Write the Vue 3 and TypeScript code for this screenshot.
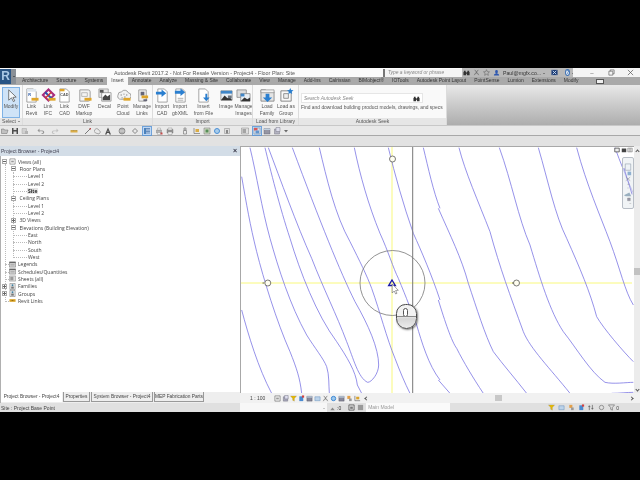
<template>
  <div class="screen">
    <div class="window">
      <div class="app-btn"><span class="app-r">R</span><span class="app-arrow"></span></div>

      <header class="titlebar">
        <span class="doc-title">Autodesk Revit 2017.2 -  Not For Resale Version -    Project4 - Floor Plan: Site</span>
        <div class="search-box">Type a keyword or phrase</div>
        <div class="infocenter">
          <svg v-for="name in ['binoculars', 'sign', 'star']" :key="name" class="ic8" viewBox="0 0 16 16">
            <path v-for="(p, i) in icons[name]" :key="i" :d="p.d" :fill="p.fill || 'none'" :stroke="p.stroke" :stroke-width="p.sw" />
          </svg>
          <svg class="ic8" viewBox="0 0 16 16">
            <path d="M5 5a3 3 0 016 0v2a3 3 0 01-6 0zM2 15c0-4 3-5 6-5s6 1 6 5z" fill="#2f58b0" />
          </svg>
          <span class="user">Paul@mgfx.co...</span>
          <span class="caret"></span>
          <svg class="ic8 exchange" viewBox="0 0 16 16">
            <path d="M1 2h14v12H1z" fill="#1f3f78" /><path d="M4 4l8 8M12 4l-8 8" stroke="#cfe0f5" stroke-width="2" />
          </svg>
          <span class="help">?</span>
          <span class="caret"></span>
        </div>
        <div class="win-controls">
          <span class="win-btn">–</span>
          <svg class="win-svg" viewBox="0 0 8 8"><path d="M1 2.500h4.500v4.500H1zM2.500 2.500V1H7v4.500H5.500" fill="none" stroke="#555" stroke-width=".7" /></svg>
          <svg class="win-svg" viewBox="0 0 8 8"><path d="M1 1l6 6M7 1l-6 6" stroke="#555" stroke-width=".8" /></svg>
        </div>
      </header>

      <nav class="tabs">
        <span v-for="tab in tabs" :key="tab" :class="['tab', { active: tab === 'Insert' }]">{{ tab }}</span>
        <span class="tab-toggle"></span>
      </nav>

      <section class="ribbon">
        <div v-for="panel in panels" :key="panel.name" class="panel" :style="{ width: panel.width + 'px' }">
          <div class="panel-body" :style="{ paddingLeft: (panel.pad || 0) + 'px' }">
            <button
              v-for="b in panel.buttons"
              :key="b.label"
              type="button"
              :class="['rb', { selected: b.selected }]"
              :style="{ width: b.width + 'px' }"
            >
              <svg class="rb-icon" viewBox="0 0 16 16">
                <path v-for="(p, i) in icons[b.icon]" :key="i" :d="p.d" :fill="p.fill || 'none'" :stroke="p.stroke" :stroke-width="p.sw" />
                <text v-if="b.mark" :x="b.markX || 3.500" y="9" class="icon-mark" :fill="b.markFill || '#555'">{{ b.mark }}</text>
              </svg>
              <span class="rb-label">{{ b.label }}</span>
            </button>
            <div v-if="panel.name === 'Autodesk Seek'" class="seek">
              <div class="seek-input">
                <span>Search Autodesk Seek</span>
                <svg class="ic8" viewBox="0 0 16 16">
                  <path v-for="(p, i) in icons.binoculars" :key="i" :d="p.d" :fill="p.fill" />
                </svg>
              </div>
              <p class="seek-text">Find and download building product models, drawings, and specs</p>
            </div>
          </div>
          <div class="panel-label">{{ panel.name }}<span v-if="panel.name === 'Select'" class="caret label-caret"></span></div>
        </div>
        <div class="ribbon-rest"></div>
      </section>

      <div class="qat">
        <svg
          v-for="(q, idx) in qatIcons"
          :key="idx"
          :class="['q-icon', { on: q.on }]"
          :style="{ marginLeft: q.gap + 'px' }"
          viewBox="0 0 16 16"
        >
          <path v-for="(p, i) in icons[q.icon]" :key="i" :d="p.d" :fill="p.fill || 'none'" :stroke="p.stroke" :stroke-width="p.sw" />
        </svg>
      </div>
      <div class="band"></div>

      <main class="main">
        <aside class="browser">
          <div class="browser-title">
            <span>Project Browser - Project4</span>
            <span class="browser-close">×</span>
          </div>
          <div class="tree">
            <i class="vline first"></i>
            <i class="vline second"></i>
            <div
              v-for="(row, idx) in rows"
              :key="idx"
              :class="['row', 'd' + row.depth, { leaf: !row.box, current: row.current }]"
            >
              <span v-if="row.box" :class="['box', row.box]"></span>
              <span v-else-if="row.depth < 2" class="box blank"></span>
              <svg v-if="row.icon" class="row-icon" viewBox="0 0 16 16">
                <path v-for="(p, i) in icons[row.icon]" :key="i" :d="p.d" :fill="p.fill || 'none'" :stroke="p.stroke" :stroke-width="p.sw" />
              </svg>
              <span class="row-label">{{ row.label }}</span>
            </div>
          </div>
          <div class="browser-tabs">
            <span
              v-for="(t, idx) in browserTabs"
              :key="t.label"
              :class="['b-tab', { active: idx === 0 }]"
              :style="{ width: t.width + 'px' }"
            >{{ t.label }}</span>
          </div>
        </aside>

        <div class="view">
          <div class="view-top">
            <div class="canvas">
              <svg class="drawing" viewBox="240 146 394 247">
                <line x1="240.500" y1="146" x2="240.500" y2="393" stroke="#a8a8a8" />
                <line x1="240" y1="146.500" x2="634" y2="146.500" stroke="#a8a8a8" />
                <line x1="241" y1="283" x2="632" y2="283" stroke="#f9f97c" stroke-width="1" />
                <line x1="392" y1="147" x2="392" y2="393" stroke="#f9f97c" stroke-width="1" />
                <g transform="translate(240 145) scale(.33333)" class="contours">
                  <path v-for="d in contoursLeft" :key="d" :d="d" />
                </g>
                <g transform="translate(440 145) scale(.33333)" class="contours">
                  <path v-for="d in contoursRight" :key="d" :d="d" />
                </g>
                <line x1="412.700" y1="147" x2="412.700" y2="393" stroke="#777" stroke-width="1" />
                <circle cx="392.500" cy="283" r="32.500" fill="none" stroke="#777" stroke-width=".8" />
                <g v-for="m in markers" :key="m.x" class="marker">
                  <circle :cx="m.x" :cy="m.y" r="3" />
                </g>
                <path d="M264 283h-1.500M513.500 283h-1.500" stroke="#222" stroke-width=".7" />
                <path d="M392 280l3.300 5.500h-6.600z" fill="none" stroke="#1d1da8" stroke-width="1.400" />
                <path d="M392.200 284v9l2-2 1.500 3 1.300-.7-1.400-2.800 2.700-.2z" fill="#fff" stroke="#666" stroke-width=".6" />
              </svg>
              <div class="mouse">
                <span class="wheel"></span>
                <span class="mouse-split"></span>
              </div>
              <div class="view-ctrls">
                <svg class="vc" viewBox="0 0 8 8"><path d="M1 1.500h6v5H1z" fill="#eee" stroke="#444" /></svg>
                <svg class="vc" viewBox="0 0 8 8"><path d="M1 2h6v5H1z" fill="#444" /></svg>
                <svg class="vc" viewBox="0 0 8 8"><path d="M1 1.500h6v5H1zM4 1.500v5" fill="#ddd" stroke="#777" stroke-width=".7" /></svg>
              </div>
              <div class="nav-bar">
                <svg viewBox="0 0 11 51">
                  <path d="M2.500 4.500h6v7h-6z" fill="#eef2f6" stroke="#8a96a5" stroke-width=".6" />
                  <path d="M5 13h4v4H5z" fill="#8fb0d0" />
                  <path d="M1 9L10 38" stroke="#6b66d9" stroke-width=".7" />
                  <path d="M3 19l5 4M8 19l-5 4M5 27h2M5 31h1" stroke="#8a8f95" stroke-width=".6" />
                  <path d="M1 39l6-3 2 4H3z" fill="#9ab0c0" />
                  <path d="M5 42h3v3H5zM7 48h2" fill="#99a" stroke="#888" stroke-width=".4" />
                </svg>
              </div>
            </div>
            <div class="vscroll">
              <span class="chev up"></span>
              <span class="thumb"></span>
              <span class="chev down"></span>
            </div>
          </div>
          <div class="view-bar">
            <span class="scale">1 : 100</span>
            <svg
              v-for="(v, idx) in viewBarIcons"
              :key="idx"
              class="vb-icon"
              viewBox="0 0 16 16"
            >
              <path v-for="(p, i) in icons[v]" :key="i" :d="p.d" :fill="p.fill || 'none'" :stroke="p.stroke" :stroke-width="p.sw" />
            </svg>
            <span class="chev left"></span>
            <div class="hscroll"><span class="hthumb"></span></div>
            <span class="chev right"></span>
          </div>
        </div>
      </main>

      <footer class="statusbar">
        <span class="status-text">Site : Project Base Point</span>
        <div class="status-input"><span class="combo-arrow"></span></div>
        <svg class="st-icon" viewBox="0 0 16 16"><path d="M3 14l5-6 5 6z" fill="#888" /></svg>
        <span class="status-zero">:0</span>
        <svg class="st-icon wide" viewBox="0 0 16 16"><path d="M2 2h12v12H2z" fill="#ddd" stroke="#333" stroke-width="1.400" /><path d="M5 6h6v5H5z" fill="#777" /></svg>
        <svg class="st-icon" viewBox="0 0 16 16"><path d="M2 2h12v12H2z" fill="#999" /></svg>
        <div class="model-box">Main Model</div>
        <svg
          v-for="(s, idx) in statusIcons"
          :key="idx"
          class="st-icon tray"
          viewBox="0 0 16 16"
        >
          <path v-for="(p, i) in icons[s]" :key="i" :d="p.d" :fill="p.fill || 'none'" :stroke="p.stroke" :stroke-width="p.sw" />
        </svg>
        <span class="status-count">0</span>
      </footer>
    </div>
  </div>
</template>

<script setup lang="ts">
interface Part {
  d: string
  fill?: string
  stroke?: string
  sw?: number
}

interface RibbonButton {
  label: string
  icon: string
  width: number
  selected?: boolean
  mark?: string
  markX?: number
  markFill?: string
}

interface Panel {
  name: string
  width: number
  pad?: number
  buttons: RibbonButton[]
}

interface TreeRow {
  label: string
  depth: number
  box?: 'plus' | 'minus'
  icon?: string
  current?: boolean
}

const doc: Part = { d: 'M3 1h7l3 3v11H3z', fill: '#fff', stroke: '#8a8a8a', sw: 0.8 }
const tag: Part = { d: 'M8 10.500h7.500v3H8z', fill: '#dfa52a' }

const icons: Record<string, Part[]> = {
  cursor: [{ d: 'M5 2v11l3-2.500 2 4 1.500-.8-2-3.700 3.500-.3z', fill: '#f4f8fc', stroke: '#555', sw: 0.8 }],
  revit: [doc, { d: 'M3 1h10v3H3z', fill: '#dfe6ee' }, tag],
  ifc: [
    { d: 'M8 1.500l6 6-6 6-6-6z', stroke: '#a82c7c', sw: 2.200 },
    { d: 'M4.500 4.500l7 7', stroke: '#2856b0', sw: 2 },
    { d: 'M11 4.500l-6.500 6.500', stroke: '#d03838', sw: 1.600 },
    tag
  ],
  cad: [doc, { d: 'M3 1h5v2.500H3z', fill: '#dfa52a' }],
  dwf: [
    { d: 'M3 2h9a2 2 0 012 2v8a2 2 0 01-2 2H3z', fill: '#f4f4f4', stroke: '#999', sw: 1 },
    { d: 'M5 5h6v4H5z', stroke: '#aaa', sw: 0.8 },
    tag
  ],
  decal: [
    { d: 'M2 1h10v9H2z', fill: '#e6e6e6', stroke: '#888', sw: 0.7 },
    { d: 'M5 5h10v9H5z', fill: '#fff', stroke: '#777', sw: 0.7 },
    { d: 'M6 10l3-3 2 2 3-2v6H6z', fill: '#444' },
    { d: 'M3 2h4v3H3z', fill: '#555' }
  ],
  cloud: [
    { d: 'M2 8a4 4 0 014-4 4 4 0 017 1 3.500 3.500 0 01-1 7H5a3 3 0 01-3-4z', fill: '#f2f2f2', stroke: '#888', sw: 0.8 },
    { d: 'M5 7h1v1H5zM8 6h1v1H8zM11 7h1v1h-1zM6 10h1v1H6zM9 9h1v1H9z', fill: '#555' },
    tag
  ],
  links: [
    { d: 'M4 2h8v12H4z', fill: '#f2f2f2', stroke: '#8a8a8a', sw: 0.8 },
    { d: 'M6 4h4v4H6z', fill: '#667' },
    { d: 'M7 8h7v3H7z', fill: '#dfa52a' },
    { d: 'M9 12h4v2H9z', fill: '#667' }
  ],
  importCad: [doc, { d: 'M1 4h6V1.500l5 4L7 9.500V7H1z', fill: '#2a7fd0' }],
  gbxml: [doc, { d: 'M2 3h6V.500l5 4-5 4V6H2z', fill: '#2a7fd0' }, { d: 'M5 11h6M5 13h6', stroke: '#999', sw: 0.8 }],
  fromFile: [doc, { d: 'M10 6v4H7.500l3.500 4 3.500-4H12V6z', fill: '#2a7fd0' }],
  image: [
    { d: 'M2 3h12v10H2z', fill: '#e8eef4', stroke: '#777', sw: 0.7 },
    { d: 'M2 13l4-5 3 3 2-2 3 4z', fill: '#333' },
    { d: 'M2 3h12v3H2z', fill: '#3f86c8' },
    { d: 'M9.500 8h4v3h-4z', fill: '#6b7580' }
  ],
  images: [
    { d: 'M1 2h10v8H1z', fill: '#ddd', stroke: '#777', sw: 0.7 },
    { d: 'M5 6h10v8H5z', fill: '#e8eef4', stroke: '#777', sw: 0.7 },
    { d: 'M5 14l4-4 3 2 3-2v4z', fill: '#333' },
    { d: 'M5 6h4v3H5z', fill: '#3f86c8' }
  ],
  family: [
    { d: 'M1 2h5l1 2h8v10H1z', fill: '#e4e4e4', stroke: '#777', sw: 0.8 },
    { d: 'M1 2h14v3H1z', fill: '#f4f4f4', stroke: '#888', sw: 0.7 },
    { d: 'M6 6h4v4h3l-5 5-5-5h3z', fill: '#2a7fd0' }
  ],
  group: [
    { d: 'M2 3h11v11H2z', stroke: '#777', sw: 0.9 },
    { d: 'M5 6h5v5H5z', fill: '#eee', stroke: '#777', sw: 0.8 },
    { d: 'M12 0l1 2 2.500.3-2 1.700.6 2.500-2.100-1.300-2.100 1.300.6-2.500-2-1.700 2.500-.3z', fill: '#2a7fd0' }
  ],
  binoculars: [
    { d: 'M2 4h4v3H2zM10 4h4v3h-4zM1 7h6v7H1zM9 7h6v7H9zM6 8h4v3H6z', fill: '#333' }
  ],
  sign: [{ d: 'M4 2l4 5 4-5M8 7v2M3 14l3-5h4l3 5', stroke: '#555', sw: 1.400 }],
  star: [{ d: 'M8 1.500l2 4.500 4.800.5-3.600 3.200 1 4.800L8 12l-4.200 2.500 1-4.800L1.200 6.500 6 6z', stroke: '#555', sw: 1.100 }],
  open: [{ d: 'M1 4h5l1 2h7l-2 7H1z', fill: '#bbb', stroke: '#555', sw: 1 }],
  save: [{ d: 'M2 2h12v12H2z', fill: '#333' }, { d: 'M5 2h6v4H5zM5 9h6v5H5z', fill: '#ddd' }],
  sync: [{ d: 'M2 3h9v10H2z', fill: '#ccc', stroke: '#999', sw: 1 }, { d: 'M8 8h6v6H8z', fill: '#aaa' }],
  undo: [{ d: 'M5 3L1 7l4 4V8.500h5a2 2 0 010 4h-1V14h2a3.500 3.500 0 000-7H5z', fill: '#888' }],
  redo: [{ d: 'M11 3l4 4-4 4V8.500H6a2 2 0 000 4h1V14H5a3.500 3.500 0 010-7h6z', fill: '#bbb' }],
  measure: [{ d: 'M1 6h14v5H1z', fill: '#d9a32a' }, { d: 'M4 6v2M7 6v2M10 6v2M13 6v2', stroke: '#665', sw: 0.8 }],
  line: [{ d: 'M2 14L13 3', stroke: '#444', sw: 1.600 }, { d: 'M11 2h3v3h-3z', fill: '#b03030' }],
  tag: [{ d: 'M3 12a4 4 0 015-8l5 6-3 4z', stroke: '#666', sw: 1.200 }],
  letter: [{ d: 'M2 15L8 1l6 14h-3l-1-3H6l-1 3zM7 9.500h2L8 6.500z', fill: '#333' }],
  globe: [{ d: 'M8 2a6 6 0 100 12A6 6 0 008 2z', fill: '#aaa', stroke: '#555', sw: 1.200 }, { d: 'M3 8h10', stroke: '#eee', sw: 1.200 }],
  diamond: [{ d: 'M8 3l5 5-5 5-5-5z', stroke: '#444', sw: 1.400 }],
  thin: [{ d: 'M2 3h12M2 6h12M2 9h12M2 12h12', stroke: '#1f4f8f', sw: 1.300 }, { d: 'M2 2h4v12H2z', fill: '#2f6fb5' }],
  printer: [{ d: 'M3 6h10v6H3z', fill: '#aaa', stroke: '#666', sw: 0.8 }, { d: 'M5 2h6v4H5zM5 11h6v4H5z', fill: '#eee', stroke: '#777', sw: 0.7 }, { d: 'M11 11h4v4h-4z', fill: '#c03030' }],
  print2: [{ d: 'M2 5h12v7H2z', fill: '#888', stroke: '#555', sw: 0.8 }, { d: 'M4 2h8v4H4zM4 10h8v5H4z', fill: '#eee', stroke: '#666', sw: 0.7 }],
  person: [{ d: 'M6 2h4v4H6zM5 7h6v7H5z', stroke: '#555', sw: 1.200 }],
  elev: [{ d: 'M2 2v11h12', stroke: '#444', sw: 1.200 }, { d: 'M5 4h7v6H5z', fill: '#d9a32a' }],
  green: [{ d: 'M2 2h12v12H2z', fill: '#cdd8c0', stroke: '#555', sw: 1 }, { d: 'M5 5h6v6H5z', fill: '#3f7f3f' }],
  blueRing: [{ d: 'M3 8a5 5 0 0110 0 5 5 0 01-10 0z', fill: '#9cc8ec', stroke: '#2f7fd0', sw: 2 }],
  switch: [{ d: 'M3 3h10v10H3z', fill: '#ddd', stroke: '#777', sw: 1 }, { d: 'M6 6h4v7H6z', fill: '#777' }],
  highlight: [{ d: 'M2 2h12v12H2z', fill: '#cfe4fa', stroke: '#555', sw: 0.8 }, { d: 'M2 2h7v5H2z', fill: '#d64040' }, { d: 'M5 7h7v6H5z', fill: '#4a86c8' }],
  rooms: [{ d: 'M2 3h12v11H2z', fill: '#889', stroke: '#445', sw: 0.8 }, { d: 'M2 3h12v3H2z', fill: '#bcd' }],
  stack: [{ d: 'M3 4h10v10H3z', fill: '#aab', stroke: '#667', sw: 1 }, { d: 'M6 1h8v8H6z', fill: '#dde', stroke: '#667', sw: 1 }],
  caretDown: [{ d: 'M4 6h8l-4 5z', fill: '#555' }],
  legend: [{ d: 'M1 2h14v12H1z', fill: '#e0e0e0', stroke: '#555', sw: 1 }, { d: 'M1 2h14v3H1z', fill: '#666' }, { d: 'M3 8h10M3 11h10', stroke: '#777', sw: 1 }],
  sheet: [{ d: 'M1 2h14v12H1z', fill: '#ddd', stroke: '#777', sw: 1 }, { d: 'M3 4h7v8H3z', fill: '#999' }],
  famIcon: [{ d: 'M2 1h12v14H2z', fill: '#efefef', stroke: '#555', sw: 1 }, { d: 'M5 8h6v5H5z', fill: '#777' }, { d: 'M6 3h4v4H6z', fill: '#3f7f9f' }],
  views: [{ d: 'M2 2h12v12H2z', stroke: '#555', sw: 1.200 }, { d: 'M5 6h6v4H5z', fill: '#999' }],
  revitLink: [{ d: 'M1 5h14v6H1z', fill: '#d9a020' }, { d: 'M6 7h4v2H6z', fill: '#8a6a10' }],
  filter: [{ d: 'M1 2h14l-5 6v6l-4-2V8z', stroke: '#555', sw: 1.200 }],
  filterY: [{ d: 'M1 2h14l-5 6v6l-4-2V8z', fill: '#e6b800', stroke: '#888', sw: 0.6 }],
  tray: [{ d: 'M2 4h12v9H2z', fill: '#bcd3ea', stroke: '#5a86b5', sw: 1 }],
  trayO: [{ d: 'M3 2h7v7H3z', fill: '#e3a04a' }, { d: 'M7 8h6v6H7z', fill: '#999' }],
  trayB: [{ d: 'M3 3h9v11H3z', fill: '#4a8ad0' }, { d: 'M9 1h5v5H9z', fill: '#d04040' }],
  trayS: [{ d: 'M3 14V4M3 4L1 7M3 4l2 3M10 2v10M10 12l-2-3M10 12l2-3', stroke: '#444', sw: 1.300 }],
  gear: [{ d: 'M8 3a5 5 0 100 10A5 5 0 008 3z', stroke: '#888', sw: 2 }]
}

const tabs = [
  'Architecture', 'Structure', 'Systems', 'Insert', 'Annotate', 'Analyze', 'Massing & Site', 'Collaborate',
  'View', 'Manage', 'Add-Ins', 'Calrissian', 'BIMobject®', 'IOTools', 'Autodesk Point Layout', 'PointSense',
  'Lumion', 'Extensions', 'Modify'
]

const panels: Panel[] = [
  {
    name: 'Select',
    width: 23,
    buttons: [{ label: 'Modify', icon: 'cursor', width: 18, selected: true }]
  },
  {
    name: 'Link',
    width: 130,
    buttons: [
      { label: 'Link Revit', icon: 'revit', width: 17, mark: 'R', markX: 4.500, markFill: '#1f4fa0' },
      { label: 'Link IFC', icon: 'ifc', width: 16 },
      { label: 'Link CAD', icon: 'cad', width: 17, mark: 'CAD', markX: 3.500 },
      { label: 'DWF Markup', icon: 'dwf', width: 22 },
      { label: 'Decal', icon: 'decal', width: 19 },
      { label: 'Point Cloud', icon: 'cloud', width: 18 },
      { label: 'Manage Links', icon: 'links', width: 20 }
    ]
  },
  {
    name: 'Import',
    width: 100,
    buttons: [
      { label: 'Import CAD', icon: 'importCad', width: 18 },
      { label: 'Import gbXML', icon: 'gbxml', width: 18 },
      { label: 'Insert\nfrom File', icon: 'fromFile', width: 29 },
      { label: 'Image', icon: 'image', width: 16 },
      { label: 'Manage Images', icon: 'images', width: 19 }
    ]
  },
  {
    name: 'Load from Library',
    width: 46,
    pad: 5,
    buttons: [
      { label: 'Load Family', icon: 'family', width: 18 },
      { label: 'Load as\nGroup', icon: 'group', width: 20 }
    ]
  },
  { name: 'Autodesk Seek', width: 148, buttons: [] }
]

const qatIcons = [
  { icon: 'open', gap: 1 }, { icon: 'save', gap: 2 }, { icon: 'sync', gap: 2 }, { icon: 'undo', gap: 8 },
  { icon: 'redo', gap: 6 }, { icon: 'measure', gap: 11 }, { icon: 'line', gap: 6 }, { icon: 'tag', gap: 2 },
  { icon: 'letter', gap: 2 }, { icon: 'globe', gap: 6 }, { icon: 'diamond', gap: 5 }, { icon: 'thin', gap: 4, on: true },
  { icon: 'printer', gap: 4 }, { icon: 'print2', gap: 3 }, { icon: 'person', gap: 7 }, { icon: 'elev', gap: 4 },
  { icon: 'green', gap: 2 }, { icon: 'blueRing', gap: 2 }, { icon: 'switch', gap: 2 }, { icon: 'sheet', gap: 10 },
  { icon: 'highlight', gap: 4, on: true }, { icon: 'rooms', gap: 2 }, { icon: 'stack', gap: 2 }, { icon: 'caretDown', gap: 1 }
]

const rows: TreeRow[] = [
  { label: 'Views (all)', depth: 0, box: 'minus', icon: 'views' },
  { label: 'Floor Plans', depth: 1, box: 'minus' },
  { label: 'Level 1', depth: 2 },
  { label: 'Level 2', depth: 2 },
  { label: 'Site', depth: 2, current: true },
  { label: 'Ceiling Plans', depth: 1, box: 'minus' },
  { label: 'Level 1', depth: 2 },
  { label: 'Level 2', depth: 2 },
  { label: '3D Views', depth: 1, box: 'plus' },
  { label: 'Elevations (Building Elevation)', depth: 1, box: 'minus' },
  { label: 'East', depth: 2 },
  { label: 'North', depth: 2 },
  { label: 'South', depth: 2 },
  { label: 'West', depth: 2 },
  { label: 'Legends', depth: 0, icon: 'legend' },
  { label: 'Schedules/Quantities', depth: 0, icon: 'legend' },
  { label: 'Sheets (all)', depth: 0, icon: 'sheet' },
  { label: 'Families', depth: 0, box: 'plus', icon: 'famIcon' },
  { label: 'Groups', depth: 0, box: 'plus', icon: 'famIcon' },
  { label: 'Revit Links', depth: 0, icon: 'revitLink' }
]

const browserTabs = [
  { label: 'Project Browser - Project4', width: 61 },
  { label: 'Properties', width: 27 },
  { label: 'System Browser - Project4', width: 62 },
  { label: 'MEP Fabrication Parts', width: 50 }
]

const contoursLeft = [
  'M5,95 C20,180 30,240 50,320 C70,400 110,530 150,620 C170,670 180,700 185,745',
  'M30,8 C50,90 65,190 90,280 C115,370 150,480 200,570 C225,610 250,640 260,665 C268,690 266,720 268,745',
  'M75,8 C90,70 120,190 150,280 C180,380 230,510 290,590 C320,635 348,680 352,720 L365,745',
  'M85,8 C120,100 170,240 215,340 C250,430 290,510 320,590 C340,640 355,700 383,712 C395,712 416,685 416,660 C416,610 385,540 345,470 C300,380 240,230 157,8',
  'M238,8 C260,100 285,210 330,290 C360,350 380,390 395,430 C420,500 440,580 465,640 C480,680 495,715 510,745',
  'M343,8 C360,90 385,180 420,265 C445,320 460,370 475,400 C500,460 515,500 530,540 C545,590 565,660 600,705',
  'M445,8 C465,90 490,180 520,265 C545,320 575,390 600,465',
  'M550,8 C565,70 580,140 600,190',
  'M5,495 C25,570 55,670 95,745'
]

const contoursRight = [
  'M-5,705 L30,745',
  'M-5,465 C15,530 35,590 50,610 C70,650 100,700 130,745',
  'M-5,190 C30,270 65,340 85,415 C110,490 135,570 160,620 C190,660 225,700 260,745',
  'M57,8 C75,80 115,170 150,260 C180,370 210,450 250,560 C270,610 330,670 390,745',
  'M178,8 C215,110 235,220 270,300 C300,400 330,500 370,560 C410,610 450,680 495,712 C520,718 560,712 580,712',
  'M295,8 C325,110 345,210 380,280 C420,370 450,440 470,515 C490,550 550,620 580,650',
  'M410,8 C440,120 480,210 510,290 C540,370 555,440 580,480',
  'M525,8 C540,50 560,100 580,145',
  'M515,745 C540,745 560,742 580,742'
]

const markers = [
  { x: 392.500, y: 159 },
  { x: 267.800, y: 283 },
  { x: 516.500, y: 283 }
]

const viewBarIcons = [
  'views', 'stack', 'filterY', 'trayB', 'rooms', 'tray', 'sign', 'blueRing', 'rooms', 'trayO', 'elev'
]

const statusIcons = ['filterY', 'tray', 'trayO', 'trayB', 'trayS', 'gear', 'filter']
</script>

<style scoped>
* {
  box-sizing: border-box;
}

.screen {
  width: 640px;
  height: 480px;
  background: #000;
  padding-top: 68px;
  overflow: hidden;
  font-family: "Liberation Sans", "Open Sans", sans-serif;
  color: #444;
}

.window {
  position: relative;
  width: 640px;
  height: 344px;
  display: flex;
  flex-direction: column;
  background: #eee;
  filter: blur(0.4px);
}

.app-btn {
  position: absolute;
  top: 1px;
  left: 0;
  width: 16px;
  height: 15px;
  display: flex;
  background: #8a9097;
  z-index: 2;
}

.app-r {
  width: 11px;
  height: 15px;
  background: #2a5585;
  color: #a9c8e6;
  font: 700 12px/15px "Liberation Sans", sans-serif;
  text-align: center;
}

.app-arrow {
  margin: 7px 0 0 1.500px;
  border: 1.500px solid transparent;
  border-top-color: #222;
}

.titlebar {
  height: 9px;
  display: flex;
  align-items: center;
  background: #fbfbfb;
  font-size: 5px;
  flex-shrink: 0;
}

.doc-title {
  width: 383px;
  padding-left: 114px;
  white-space: pre;
  color: #555;
  font-size: 5.400px;
}

.search-box {
  width: 79px;
  height: 8px;
  padding-left: 3px;
  border-left: 2px solid #777;
  background: #f4f4f4;
  color: #888;
  line-height: 8px;
  font-style: italic;
  font-size: 4.900px;
}

.infocenter {
  width: 111px;
  height: 9px;
  display: flex;
  align-items: center;
  gap: 2px;
  padding-left: 1px;
  background: #b9b9b9;
}

.ic8 {
  width: 7px;
  height: 7px;
  flex-shrink: 0;
}

.infocenter .ic8 {
  margin-right: 1px;
}

.user {
  color: #333;
  white-space: nowrap;
  font-size: 5.200px;
}

.exchange {
  margin-left: 4px;
}

.caret {
  border: 1.500px solid transparent;
  border-top-color: #444;
  margin-top: 2px;
}

.help {
  width: 7px;
  height: 7px;
  margin-left: 4px;
  border-radius: 50%;
  border: 1px solid #3f73b5;
  background: #e8eef5;
  color: #3f73b5;
  text-align: center;
  font: 700 5px/5px "Liberation Sans", sans-serif;
}

.win-controls {
  flex: 1;
  height: 9px;
  display: flex;
  align-items: center;
  justify-content: flex-end;
  gap: 12px;
  padding-right: 6px;
  background: #f4f4f4;
}

.win-btn {
  color: #555;
  font-size: 6px;
  line-height: 8px;
  width: 8px;
  text-align: center;
}

.win-svg {
  width: 7px;
  height: 7px;
}

.tabs {
  height: 8px;
  display: flex;
  align-items: stretch;
  padding-left: 18px;
  background: #a9a9a9;
  flex-shrink: 0;
  position: relative;
}

.tab {
  padding: 0 4px;
  font-size: 4.950px;
  line-height: 8px;
  white-space: nowrap;
  color: #333;
}

.tab.active {
  background: #f8f8f8;
  color: #444;
}

.tab-toggle {
  width: 8px;
  height: 5px;
  margin: 1.500px 0 0 14px;
  background: #eee;
  border: 1px solid #555;
}

.ribbon {
  height: 40px;
  display: flex;
  background: #f9f9f9;
  flex-shrink: 0;
}

.panel {
  display: flex;
  flex-direction: column;
  border-right: 1px solid #dcdcdc;
  flex-shrink: 0;
  overflow: hidden;
}

.panel-body {
  flex: 1;
  display: flex;
  padding-top: 2px;
}

.panel-label {
  height: 7px;
  background: #e6e6e6;
  color: #555;
  font-size: 5px;
  line-height: 7px;
  text-align: center;
  white-space: nowrap;
}

.label-caret {
  display: inline-block;
  margin-left: 2px;
}

.rb {
  height: 31px;
  padding: 1px 0 0;
  border: 0;
  background: transparent;
  display: flex;
  flex-direction: column;
  align-items: center;
  font-family: inherit;
  color: #555;
  flex-shrink: 0;
}

.rb.selected {
  margin-left: 2px;
  background: #cfe3f7;
  border: 1px solid #7fb2e5;
  padding-top: 0;
}

.rb-icon {
  width: 15px;
  height: 15px;
  flex-shrink: 0;
}

.rb-label {
  font-size: 5px;
  line-height: 7px;
  width: 100%;
  text-align: center;
  white-space: pre-line;
}

.icon-mark {
  font: 700 4px "Liberation Sans", sans-serif;
}

.seek {
  flex: 1;
  padding: 6px 0 0 2px;
  min-width: 0;
}

.seek-input {
  width: 122px;
  height: 10px;
  padding: 0 2px;
  display: flex;
  align-items: center;
  justify-content: space-between;
  background: #fff;
  border: 1px solid #e6e6e6;
  color: #888;
  font-size: 4.900px;
  font-style: italic;
}

.seek-text {
  margin: 1px 0 0;
  font-size: 4.900px;
  line-height: 7px;
  white-space: nowrap;
  color: #555;
}

.ribbon-rest {
  flex: 1;
  background: linear-gradient(#e8e8e8, #adadad);
}

.qat {
  height: 11px;
  display: flex;
  align-items: center;
  background: #e9e9e9;
  border-top: 1px solid #c8c8c8;
  border-bottom: 1px solid #a8a8a8;
  flex-shrink: 0;
}

.q-icon {
  width: 8px;
  height: 8px;
  flex-shrink: 0;
  opacity: 0.85;
}

.q-icon.on {
  background: #b9d6f5;
  outline: 1px solid #5a96d8;
}

.band {
  height: 10px;
  background: #e2e2e2;
  flex-shrink: 0;
}

.main {
  flex: 1;
  min-height: 0;
  display: flex;
}

.browser {
  width: 240px;
  display: flex;
  flex-direction: column;
  background: #fff;
  flex-shrink: 0;
}

.browser-title {
  height: 10px;
  padding: 0 1px;
  display: flex;
  align-items: center;
  justify-content: space-between;
  background: #d3dde7;
  font-size: 5px;
  color: #445;
}

.browser-close {
  font: 700 7px/8px "Liberation Sans", sans-serif;
  margin-right: 2px;
  color: #334;
}

.tree {
  position: relative;
  flex: 1;
  padding-top: 2px;
  border-left: 1px solid #b0b0b0;
  min-height: 0;
  font-family: "Open Sans", "Liberation Sans", sans-serif;
}

.vline {
  position: absolute;
  border-left: 1px dotted #bbb;
}

.vline.first {
  left: 3.500px;
  top: 8px;
  height: 138px;
}

.vline.second {
  left: 12px;
  top: 16px;
  height: 86px;
}

.row {
  position: relative;
  height: 7.330px;
  display: flex;
  align-items: center;
  font-size: 5px;
  white-space: nowrap;
  color: #444;
}

.row.d0 {
  padding-left: 1px;
}

.row.d1 {
  padding-left: 9.500px;
}

.row.d2 {
  padding-left: 27px;
}

.row.d2::before {
  content: "";
  position: absolute;
  left: 12px;
  width: 14px;
  top: 50%;
  border-top: 1px dotted #bbb;
}

.row.d0.leaf::before {
  content: "";
  position: absolute;
  left: 4px;
  width: 4px;
  top: 50%;
  border-top: 1px dotted #bbb;
}

.box {
  position: relative;
  width: 5px;
  height: 5px;
  margin-right: 2px;
  background: #fff;
  border: 1px solid #aaa;
  flex-shrink: 0;
  z-index: 1;
}

.box.blank {
  visibility: hidden;
}

.d1 .box {
  margin-right: 4px;
}

.box.minus::before,
.box.plus::before {
  content: "";
  position: absolute;
  left: 0;
  right: 0;
  top: 1px;
  height: 1px;
  background: #666;
}

.box.plus::after {
  content: "";
  position: absolute;
  top: 0;
  bottom: 0;
  left: 1px;
  width: 1px;
  background: #666;
}

.row-icon {
  width: 7px;
  height: 7px;
  margin-right: 2px;
  flex-shrink: 0;
  z-index: 1;
}

.row.current .row-label {
  font-weight: 700;
  background: #e6e6e6;
  color: #222;
  padding: 0 1px;
  margin-left: -1px;
}

.browser-tabs {
  height: 11px;
  display: flex;
  background: #eeeeee;
  border-left: 1px solid #b0b0b0;
  flex-shrink: 0;
}

.b-tab {
  font-size: 4.800px;
  line-height: 9px;
  height: 10px;
  white-space: nowrap;
  text-align: center;
  border: 1px solid #999;
  border-top: 0;
  margin-right: 1px;
  color: #444;
  flex-shrink: 0;
}

.b-tab.active {
  background: #fff;
  border: 0;
  line-height: 10px;
}

.view {
  flex: 1;
  min-width: 0;
  display: flex;
  flex-direction: column;
}

.view-top {
  flex: 1;
  min-height: 0;
  display: flex;
}

.canvas {
  position: relative;
  width: 394px;
  height: 247px;
  background: #fff;
  flex-shrink: 0;
}

.drawing {
  position: absolute;
  left: 0;
  top: 0;
  width: 394px;
  height: 247px;
}

.contours path {
  fill: none;
  stroke: #7671e2;
  stroke-width: 2.300;
}

.marker circle {
  fill: #fffef0;
  stroke: #444;
  stroke-width: 0.7;
}

.mouse {
  position: absolute;
  left: 156px;
  top: 158px;
  width: 21px;
  height: 25px;
  border-radius: 10px 10px 11px 11px;
  background: linear-gradient(#f2f2f2 45%, #d6d6d6 60%, #ececec);
  border: 1.500px solid #4a4a4a;
  box-shadow: 1px 1px 2px rgba(0, 0, 0, 0.5);
}

.wheel {
  position: absolute;
  left: 6px;
  top: 3px;
  width: 5px;
  height: 9px;
  border: 1px solid #555;
  border-radius: 3px;
  background: #fff;
}

.mouse-split {
  position: absolute;
  left: 0;
  right: 0;
  top: 11px;
  border-top: 1px solid #888;
}

.view-ctrls {
  position: absolute;
  right: 0;
  top: 1px;
  display: flex;
  gap: 0.5px;
  padding-right: 1px;
}

.vc {
  width: 6px;
  height: 6px;
}

.nav-bar {
  position: absolute;
  left: 382px;
  top: 11px;
  width: 12px;
  height: 52px;
  background: rgba(232, 236, 240, 0.6);
  border: 1px solid #b8bec6;
  border-radius: 2px;
}

.nav-bar svg {
  display: block;
  width: 10px;
  height: 50px;
}

.vscroll {
  flex: 1;
  position: relative;
  background: #ececec;
}

.thumb {
  position: absolute;
  left: 0;
  right: 0;
  top: 122px;
  height: 7px;
  background: #c2c2c2;
}

.chev {
  position: absolute;
  width: 3px;
  height: 3px;
  border-left: 1px solid #555;
  border-top: 1px solid #555;
}

.chev.up {
  left: 1.500px;
  top: 4px;
  transform: rotate(45deg);
}

.chev.down {
  left: 1.500px;
  bottom: 2px;
  transform: rotate(225deg);
}

.view-bar {
  height: 10px;
  display: flex;
  align-items: center;
  background: #f1f1f1;
  flex-shrink: 0;
}

.scale {
  width: 34px;
  padding-left: 10px;
  font-size: 5px;
  color: #444;
  flex-shrink: 0;
}

.vb-icon {
  width: 7px;
  height: 7px;
  margin-right: 1px;
  flex-shrink: 0;
}

.chev.left,
.chev.right {
  position: static;
  flex-shrink: 0;
}

.chev.left {
  transform: rotate(-45deg);
  margin-left: 3px;
}

.chev.right {
  transform: rotate(135deg);
  margin-right: 7px;
}

.hscroll {
  flex: 1;
  height: 100%;
  display: flex;
  padding-left: 127px;
}

.hthumb {
  width: 7px;
  height: 6px;
  margin-top: 2px;
  background: #c8c8c8;
}

.statusbar {
  height: 9px;
  display: flex;
  align-items: center;
  background: #e0e0e0;
  flex-shrink: 0;
  font-size: 5px;
}

.status-text {
  width: 240px;
  padding-left: 1px;
  color: #444;
  flex-shrink: 0;
}

.status-input {
  width: 87px;
  height: 9px;
  display: flex;
  justify-content: flex-end;
  align-items: center;
  padding-right: 2px;
  background: #f7f7f7;
  flex-shrink: 0;
}

.combo-arrow {
  border: 1.500px solid transparent;
  border-top-color: #999;
  margin-top: 2px;
}

.st-icon {
  width: 7px;
  height: 7px;
  margin-left: 2px;
  flex-shrink: 0;
}

.st-icon.wide {
  margin-left: 7px;
}

.status-zero {
  margin-left: 1px;
  color: #333;
}

.model-box {
  width: 84px;
  height: 9px;
  margin-left: 2px;
  padding-left: 2px;
  background: #fafafa;
  color: #999;
  line-height: 9px;
  flex-shrink: 0;
}

.st-icon.tray {
  margin-left: 3px;
}

.statusbar .model-box + .tray {
  margin-left: 98px;
}

.status-count {
  margin-left: 1px;
  color: #444;
}
</style>

<style>
html,
body {
  margin: 0;
  background: #000;
}
</style>
